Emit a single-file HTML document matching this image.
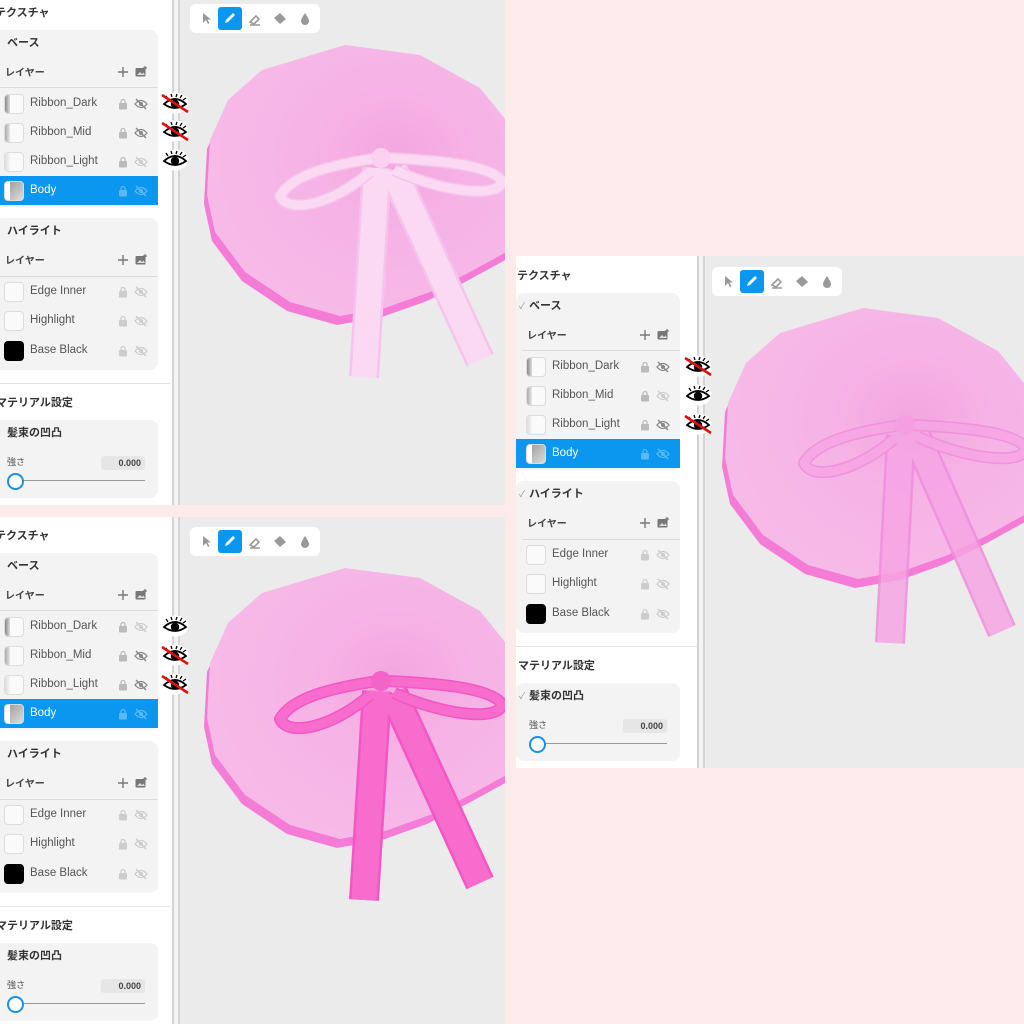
<!DOCTYPE html>
<html style="width:1024px;height:1024px;overflow:hidden"><head><meta charset="utf-8">
<style>
*{margin:0;padding:0;box-sizing:border-box}
body{width:1024px;height:1024px;background:#fcebea;position:relative;overflow:hidden;font-family:"Liberation Sans","Noto Sans CJK JP",sans-serif}
.wrap{position:absolute;overflow:hidden;background:#ebebeb}
.inner{position:absolute;left:0;top:0;width:520px;height:510px}
.side{position:absolute;left:-20px;top:-20px;width:192px;height:540px;background:#fff}
.div1{position:absolute;left:172px;top:-20px;width:8px;height:540px;background:#f4f4f4;border-left:2px solid #d4d4d4;border-right:2px solid #d4d4d4}
.a{position:absolute}
.t{position:absolute;white-space:nowrap;line-height:1}
.h1{font-size:11px;font-weight:bold;color:#333;font-family:"Noto Sans CJK JP",sans-serif}
.card{position:absolute;left:-6px;width:164px;background:#f3f3f3;border-radius:8px}
.lbl{font-size:10px;color:#444;font-weight:bold;font-family:"Noto Sans CJK JP",sans-serif}
.row{position:absolute;left:-6px;width:164px;height:29px}
.row .th{position:absolute;left:10px;top:5px;width:20px;height:20px;border:1px solid #ddd;border-radius:4px;background:#fafafa;overflow:hidden}
.row .th i{position:absolute;left:0;top:0;width:5px;height:18px;background:linear-gradient(90deg,#888,#ddd)}
.row .nm{position:absolute;left:36px;top:8px;font-size:11.5px;color:#555}
.row .ic{position:absolute;top:9px}
.sel{background:#0b97f0}
.sel .nm{color:#fff}
.line{position:absolute;height:1px;background:#dcdcdc}
.tb{position:absolute;left:190px;top:4px;width:130px;height:29px;background:#fff;border-radius:6px}
.pen{position:absolute;left:28px;top:3px;width:24px;height:23px;background:#0b97f0;border-radius:3px}
</style></head><body>

<svg width="0" height="0" style="position:absolute">
<defs>
<symbol id="lock" viewBox="0 0 10 12"><rect x="1" y="5" width="8" height="6.5" rx="1" fill="currentColor"/><path d="M3 5V3.5a2 2 0 0 1 4 0V5" stroke="currentColor" stroke-width="1.3" fill="none"/></symbol>
<symbol id="eyeoff" viewBox="0 0 14 12"><path d="M1 6Q7 -1 13 6Q7 13 1 6Z" stroke="currentColor" stroke-width="1.3" fill="none"/><circle cx="7" cy="6" r="2" fill="currentColor"/><line x1="2" y1="1" x2="12" y2="11" stroke="currentColor" stroke-width="1.4"/></symbol>
<symbol id="plus" viewBox="0 0 10 10"><path d="M5 0V10M0 5H10" stroke="#777" stroke-width="1.4"/></symbol>
<symbol id="img" viewBox="0 0 12 11"><rect x="0.5" y="2" width="10" height="8.5" rx="1" fill="#777"/><path d="M2 9L5 6L7 8L8.5 6.5L10 9Z" fill="#ddd"/><path d="M10 0V4M8 2H12" stroke="#777" stroke-width="1.2"/></symbol>
<symbol id="eye" viewBox="0 0 28 22"><ellipse cx="14" cy="11" rx="13.5" ry="10.5" fill="#fff"/><path d="M3 12Q14 2 25 12Q14 20 3 12Z" stroke="#000" stroke-width="1.8" fill="#fff"/><circle cx="14" cy="12" r="4.2" fill="#000"/><path d="M7 7L5 4M11 5L10 2M15 5L16 2M19 6L21 3M22 8L25 6" stroke="#000" stroke-width="1.3"/></symbol>
<symbol id="eyex" viewBox="0 0 28 22"><use href="#eye"/><line x1="1" y1="3" x2="27" y2="20" stroke="#e01010" stroke-width="2.6"/></symbol>
<radialGradient id="hg" cx="0.62" cy="0.42" r="0.6"><stop offset="0" stop-color="#f4a6df"/><stop offset="0.45" stop-color="#f6b3e6"/><stop offset="1" stop-color="#f7b9e8"/></radialGradient>
</defs>
</svg>

<!-- ============ PANEL TOP-LEFT ============ -->
<div class="wrap" style="left:0;top:0;width:505px;height:505px">
<div class="inner" style="left:0;top:0">
<div class="side"></div><div class="div1"></div>
<svg class="a" style="left:0;top:0" width="520" height="510">
<polygon fill="#f57cd6" transform="translate(-3,9)" points="228,100 262,70 345,45 420,55 480,88 510,125 510,250 470,272 430,292 385,308 340,316 290,302 245,272 215,232 207,195 210,140"/>
<polygon fill="url(#hg)" points="228,100 262,70 345,45 420,55 480,88 510,125 510,250 470,272 430,292 385,308 340,316 290,302 245,272 215,232 207,195 210,140"/>
<g fill="none" stroke-linejoin="round">
<path d="M377,168L364,377M393,170L480,360" stroke="#f5c3ec" stroke-width="30"/>
<path d="M377,168L364,377M393,170L480,360" stroke="#fcd9f3" stroke-width="25"/>
<path d="M378,158C330,165 292,175 280,196C288,214 332,205 370,172" stroke="#f5c3ec" stroke-width="12"/>
<path d="M387,158C432,160 490,164 502,181C500,199 442,192 394,170" stroke="#f5c3ec" stroke-width="12"/>
<path d="M378,158C330,165 292,175 280,196C288,214 332,205 370,172" stroke="#fcd9f3" stroke-width="9"/>
<path d="M387,158C432,160 490,164 502,181C500,199 442,192 394,170" stroke="#fcd9f3" stroke-width="9"/>
</g>
<circle cx="381" cy="158" r="10" fill="#fbd0f0"/>
</svg>
<div class="t h1" style="left:-5px;top:7px">テクスチャ</div>
<div class="card" style="top:30px;height:177px"></div>
<div class="t h1" style="left:7px;top:37px">ベース</div>
<div class="t lbl" style="left:5px;top:67px">レイヤー</div>
<svg class="a" style="left:118px;top:67px" width="10" height="10"><use href="#plus"/></svg>
<svg class="a" style="left:135px;top:66px" width="12" height="11"><use href="#img"/></svg>
<div class="line" style="left:0;top:87px;width:158px"></div>
<div class="row" style="top:89px"><div class="th"><i></i></div><div class="nm">Ribbon_Dark</div><svg class="ic" style="left:124px;color:#bbb" width="10" height="12"><use href="#lock"/></svg><svg class="ic" style="left:140px;color:#888" width="14" height="12"><use href="#eyeoff"/></svg></div>
<div class="row" style="top:118px"><div class="th"><i style="background:linear-gradient(90deg,#aaa,#e8e8e8)"></i></div><div class="nm">Ribbon_Mid</div><svg class="ic" style="left:124px;color:#bbb" width="10" height="12"><use href="#lock"/></svg><svg class="ic" style="left:140px;color:#888" width="14" height="12"><use href="#eyeoff"/></svg></div>
<div class="row" style="top:147px"><div class="th"><i style="background:linear-gradient(90deg,#ddd,#f6f6f6)"></i></div><div class="nm">Ribbon_Light</div><svg class="ic" style="left:124px;color:#bbb" width="10" height="12"><use href="#lock"/></svg><svg class="ic" style="left:140px;color:#ccc" width="14" height="12"><use href="#eyeoff"/></svg></div>
<div class="row sel" style="top:176px"><div class="th" style="background:linear-gradient(135deg,#999,#ddd)"><i style="background:#fff"></i></div><div class="nm">Body</div><svg class="ic" style="left:124px;color:#5ab8f5" width="10" height="12"><use href="#lock"/></svg><svg class="ic" style="left:140px;color:#5ab8f5" width="14" height="12"><use href="#eyeoff"/></svg></div>
<div class="card" style="top:218px;height:152px"></div>
<div class="t h1" style="left:7px;top:225px">ハイライト</div>
<div class="t lbl" style="left:5px;top:255px">レイヤー</div>
<svg class="a" style="left:118px;top:255px" width="10" height="10"><use href="#plus"/></svg>
<svg class="a" style="left:135px;top:254px" width="12" height="11"><use href="#img"/></svg>
<div class="line" style="left:0;top:276px;width:158px"></div>
<div class="row" style="top:277px"><div class="th"></div><div class="nm">Edge Inner</div><svg class="ic" style="left:124px;color:#ccc" width="10" height="12"><use href="#lock"/></svg><svg class="ic" style="left:140px;color:#ccc" width="14" height="12"><use href="#eyeoff"/></svg></div>
<div class="row" style="top:306px"><div class="th"></div><div class="nm">Highlight</div><svg class="ic" style="left:124px;color:#ccc" width="10" height="12"><use href="#lock"/></svg><svg class="ic" style="left:140px;color:#ccc" width="14" height="12"><use href="#eyeoff"/></svg></div>
<div class="row" style="top:336px"><div class="th" style="background:#000;border-color:#000"></div><div class="nm">Base Black</div><svg class="ic" style="left:124px;color:#ccc" width="10" height="12"><use href="#lock"/></svg><svg class="ic" style="left:140px;color:#ccc" width="14" height="12"><use href="#eyeoff"/></svg></div>
<div class="line" style="left:0;top:383px;width:170px;background:#e4e4e4"></div>
<div class="t h1" style="left:-4px;top:397px">マテリアル設定</div>
<div class="card" style="top:420px;height:78px"></div>
<div class="t h1" style="left:7px;top:427px">髪束の凹凸</div>
<div class="t" style="left:7px;top:457px;font-size:9px;color:#555;font-family:'Noto Sans CJK JP',sans-serif">強さ</div>
<div class="a" style="left:101px;top:456px;width:44px;height:14px;background:#e6e6e6;border-radius:3px;font-size:9px;color:#444;text-align:right;padding:2px 4px 0 0;font-weight:bold">0.000</div>
<div class="a" style="left:15px;top:480px;width:130px;height:1px;background:#999"></div>
<div class="a" style="left:7px;top:473px;width:17px;height:17px;border-radius:50%;background:#fff;border:2px solid #1e8fe0"></div>
<div class="tb"><svg class="a" style="left:12px;top:8px" width="10" height="13"><path d="M1 1L1 11L4 8L6 12L7.5 11.3L5.5 7.5L9 7.5Z" fill="#999"/></svg><div class="pen"><svg width="24" height="23"><path d="M7 16L8 13L15 6L17 8L10 15Z" fill="#fff"/></svg></div><svg class="a" style="left:58px;top:8px" width="14" height="14"><path d="M2 10L8 4L11 7L6 12ZM2 13H12" stroke="#999" stroke-width="1.6" fill="none"/></svg><svg class="a" style="left:83px;top:8px" width="14" height="14"><path d="M1 6L7 1L13 7L7 12Z" fill="#999"/></svg><svg class="a" style="left:110px;top:8px" width="10" height="14"><path d="M5 1Q9 7 9 9A4 4 0 0 1 1 9Q1 7 5 1Z" fill="#999"/></svg></div>
<svg class="a" style="left:161px;top:92px" width="28" height="22"><use href="#eyex"/></svg>
<svg class="a" style="left:161px;top:120px" width="28" height="22"><use href="#eyex"/></svg>
<svg class="a" style="left:161px;top:149px" width="28" height="22"><use href="#eye"/></svg>
</div></div>

<!-- ============ PANEL BOTTOM-LEFT ============ -->
<div class="wrap" style="left:0;top:517px;width:505px;height:507px">
<div class="inner" style="left:0;top:6px">
<div class="side"></div><div class="div1"></div>
<svg class="a" style="left:0;top:0" width="520" height="510">
<polygon fill="#f57cd6" transform="translate(-3,9)" points="228,100 262,70 345,45 420,55 480,88 510,125 510,250 470,272 430,292 385,308 340,316 290,302 245,272 215,232 207,195 210,140"/>
<polygon fill="url(#hg)" points="228,100 262,70 345,45 420,55 480,88 510,125 510,250 470,272 430,292 385,308 340,316 290,302 245,272 215,232 207,195 210,140"/>
<g fill="none" stroke-linejoin="round">
<path d="M377,168L364,377M393,170L480,360" stroke="#f257c4" stroke-width="30"/>
<path d="M377,168L364,377M393,170L480,360" stroke="#f76ccc" stroke-width="25"/>
<path d="M378,158C330,165 292,175 280,196C288,214 332,205 370,172" stroke="#f257c4" stroke-width="12"/>
<path d="M387,158C432,160 490,164 502,181C500,199 442,192 394,170" stroke="#f257c4" stroke-width="12"/>
<path d="M378,158C330,165 292,175 280,196C288,214 332,205 370,172" stroke="#f76ccc" stroke-width="9"/>
<path d="M387,158C432,160 490,164 502,181C500,199 442,192 394,170" stroke="#f76ccc" stroke-width="9"/>
</g>
<circle cx="381" cy="158" r="10" fill="#f463c8"/>
</svg>
<div class="t h1" style="left:-5px;top:7px">テクスチャ</div>
<div class="card" style="top:30px;height:177px"></div>
<div class="t h1" style="left:7px;top:37px">ベース</div>
<div class="t lbl" style="left:5px;top:67px">レイヤー</div>
<svg class="a" style="left:118px;top:67px" width="10" height="10"><use href="#plus"/></svg>
<svg class="a" style="left:135px;top:66px" width="12" height="11"><use href="#img"/></svg>
<div class="line" style="left:0;top:87px;width:158px"></div>
<div class="row" style="top:89px"><div class="th"><i></i></div><div class="nm">Ribbon_Dark</div><svg class="ic" style="left:124px;color:#bbb" width="10" height="12"><use href="#lock"/></svg><svg class="ic" style="left:140px;color:#ccc" width="14" height="12"><use href="#eyeoff"/></svg></div>
<div class="row" style="top:118px"><div class="th"><i style="background:linear-gradient(90deg,#aaa,#e8e8e8)"></i></div><div class="nm">Ribbon_Mid</div><svg class="ic" style="left:124px;color:#bbb" width="10" height="12"><use href="#lock"/></svg><svg class="ic" style="left:140px;color:#888" width="14" height="12"><use href="#eyeoff"/></svg></div>
<div class="row" style="top:147px"><div class="th"><i style="background:linear-gradient(90deg,#ddd,#f6f6f6)"></i></div><div class="nm">Ribbon_Light</div><svg class="ic" style="left:124px;color:#bbb" width="10" height="12"><use href="#lock"/></svg><svg class="ic" style="left:140px;color:#888" width="14" height="12"><use href="#eyeoff"/></svg></div>
<div class="row sel" style="top:176px"><div class="th" style="background:linear-gradient(135deg,#999,#ddd)"><i style="background:#fff"></i></div><div class="nm">Body</div><svg class="ic" style="left:124px;color:#5ab8f5" width="10" height="12"><use href="#lock"/></svg><svg class="ic" style="left:140px;color:#5ab8f5" width="14" height="12"><use href="#eyeoff"/></svg></div>
<div class="card" style="top:218px;height:152px"></div>
<div class="t h1" style="left:7px;top:225px">ハイライト</div>
<div class="t lbl" style="left:5px;top:255px">レイヤー</div>
<svg class="a" style="left:118px;top:255px" width="10" height="10"><use href="#plus"/></svg>
<svg class="a" style="left:135px;top:254px" width="12" height="11"><use href="#img"/></svg>
<div class="line" style="left:0;top:276px;width:158px"></div>
<div class="row" style="top:277px"><div class="th"></div><div class="nm">Edge Inner</div><svg class="ic" style="left:124px;color:#ccc" width="10" height="12"><use href="#lock"/></svg><svg class="ic" style="left:140px;color:#ccc" width="14" height="12"><use href="#eyeoff"/></svg></div>
<div class="row" style="top:306px"><div class="th"></div><div class="nm">Highlight</div><svg class="ic" style="left:124px;color:#ccc" width="10" height="12"><use href="#lock"/></svg><svg class="ic" style="left:140px;color:#ccc" width="14" height="12"><use href="#eyeoff"/></svg></div>
<div class="row" style="top:336px"><div class="th" style="background:#000;border-color:#000"></div><div class="nm">Base Black</div><svg class="ic" style="left:124px;color:#ccc" width="10" height="12"><use href="#lock"/></svg><svg class="ic" style="left:140px;color:#ccc" width="14" height="12"><use href="#eyeoff"/></svg></div>
<div class="line" style="left:0;top:383px;width:170px;background:#e4e4e4"></div>
<div class="t h1" style="left:-4px;top:397px">マテリアル設定</div>
<div class="card" style="top:420px;height:78px"></div>
<div class="t h1" style="left:7px;top:427px">髪束の凹凸</div>
<div class="t" style="left:7px;top:457px;font-size:9px;color:#555;font-family:'Noto Sans CJK JP',sans-serif">強さ</div>
<div class="a" style="left:101px;top:456px;width:44px;height:14px;background:#e6e6e6;border-radius:3px;font-size:9px;color:#444;text-align:right;padding:2px 4px 0 0;font-weight:bold">0.000</div>
<div class="a" style="left:15px;top:480px;width:130px;height:1px;background:#999"></div>
<div class="a" style="left:7px;top:473px;width:17px;height:17px;border-radius:50%;background:#fff;border:2px solid #1e8fe0"></div>
<div class="tb"><svg class="a" style="left:12px;top:8px" width="10" height="13"><path d="M1 1L1 11L4 8L6 12L7.5 11.3L5.5 7.5L9 7.5Z" fill="#999"/></svg><div class="pen"><svg width="24" height="23"><path d="M7 16L8 13L15 6L17 8L10 15Z" fill="#fff"/></svg></div><svg class="a" style="left:58px;top:8px" width="14" height="14"><path d="M2 10L8 4L11 7L6 12ZM2 13H12" stroke="#999" stroke-width="1.6" fill="none"/></svg><svg class="a" style="left:83px;top:8px" width="14" height="14"><path d="M1 6L7 1L13 7L7 12Z" fill="#999"/></svg><svg class="a" style="left:110px;top:8px" width="10" height="14"><path d="M5 1Q9 7 9 9A4 4 0 0 1 1 9Q1 7 5 1Z" fill="#999"/></svg></div>
<svg class="a" style="left:161px;top:92px" width="28" height="22"><use href="#eye"/></svg>
<svg class="a" style="left:161px;top:121px" width="28" height="22"><use href="#eyex"/></svg>
<svg class="a" style="left:161px;top:150px" width="28" height="22"><use href="#eyex"/></svg>
</div></div>

<!-- ============ PANEL RIGHT ============ -->
<div class="wrap" style="left:516px;top:256px;width:508px;height:512px">
<div class="inner" style="left:6px;top:7px">
<div class="side" style="width:195px"></div><div class="div1" style="left:175px"></div>
<svg class="a" style="left:0;top:0" width="520" height="510">
<g transform="translate(-4,0)">
<polygon fill="#f57cd6" transform="translate(-3,9)" points="228,100 262,70 345,45 420,55 480,88 510,125 510,250 470,272 430,292 385,308 340,316 290,302 245,272 215,232 207,195 210,140"/>
<polygon fill="url(#hg)" points="228,100 262,70 345,45 420,55 480,88 510,125 510,250 470,272 430,292 385,308 340,316 290,302 245,272 215,232 207,195 210,140"/>
<g fill="none" stroke-linejoin="round" opacity="0.85">
<path d="M383,172L372,380M398,172L484,368" stroke="#f08ddc" stroke-width="30"/>
<path d="M383,172L372,380M398,172L484,368" stroke="#f6a5e4" stroke-width="25"/>
<path d="M384,162C336,169 298,179 286,200C294,218 338,209 376,176" stroke="#f08ddc" stroke-width="12"/>
<path d="M393,162C438,164 496,168 508,185C506,203 448,196 400,174" stroke="#f08ddc" stroke-width="12"/>
<path d="M384,162C336,169 298,179 286,200C294,218 338,209 376,176" stroke="#f6a5e4" stroke-width="9"/>
<path d="M393,162C438,164 496,168 508,185C506,203 448,196 400,174" stroke="#f6a5e4" stroke-width="9"/>
</g>
<circle cx="387" cy="162" r="10" fill="#f59ee2"/>
</g>
</svg>
<div class="t h1" style="left:-5px;top:7px">テクスチャ</div>
<div class="card" style="top:30px;height:177px"></div>
<div class="t" style="left:-3px;top:39px;font-size:9px;color:#999">✓</div>
<div class="t h1" style="left:7px;top:37px">ベース</div>
<div class="t lbl" style="left:5px;top:67px">レイヤー</div>
<svg class="a" style="left:118px;top:67px" width="10" height="10"><use href="#plus"/></svg>
<svg class="a" style="left:135px;top:66px" width="12" height="11"><use href="#img"/></svg>
<div class="line" style="left:0;top:87px;width:158px"></div>
<div class="row" style="top:89px"><div class="th"><i></i></div><div class="nm">Ribbon_Dark</div><svg class="ic" style="left:124px;color:#bbb" width="10" height="12"><use href="#lock"/></svg><svg class="ic" style="left:140px;color:#888" width="14" height="12"><use href="#eyeoff"/></svg></div>
<div class="row" style="top:118px"><div class="th"><i style="background:linear-gradient(90deg,#aaa,#e8e8e8)"></i></div><div class="nm">Ribbon_Mid</div><svg class="ic" style="left:124px;color:#bbb" width="10" height="12"><use href="#lock"/></svg><svg class="ic" style="left:140px;color:#ccc" width="14" height="12"><use href="#eyeoff"/></svg></div>
<div class="row" style="top:147px"><div class="th"><i style="background:linear-gradient(90deg,#ddd,#f6f6f6)"></i></div><div class="nm">Ribbon_Light</div><svg class="ic" style="left:124px;color:#bbb" width="10" height="12"><use href="#lock"/></svg><svg class="ic" style="left:140px;color:#888" width="14" height="12"><use href="#eyeoff"/></svg></div>
<div class="row sel" style="top:176px"><div class="th" style="background:linear-gradient(135deg,#999,#ddd)"><i style="background:#fff"></i></div><div class="nm">Body</div><svg class="ic" style="left:124px;color:#5ab8f5" width="10" height="12"><use href="#lock"/></svg><svg class="ic" style="left:140px;color:#5ab8f5" width="14" height="12"><use href="#eyeoff"/></svg></div>
<div class="card" style="top:218px;height:152px"></div>
<div class="t" style="left:-3px;top:227px;font-size:9px;color:#999">✓</div>
<div class="t h1" style="left:7px;top:225px">ハイライト</div>
<div class="t lbl" style="left:5px;top:255px">レイヤー</div>
<svg class="a" style="left:118px;top:255px" width="10" height="10"><use href="#plus"/></svg>
<svg class="a" style="left:135px;top:254px" width="12" height="11"><use href="#img"/></svg>
<div class="line" style="left:0;top:276px;width:158px"></div>
<div class="row" style="top:277px"><div class="th"></div><div class="nm">Edge Inner</div><svg class="ic" style="left:124px;color:#ccc" width="10" height="12"><use href="#lock"/></svg><svg class="ic" style="left:140px;color:#ccc" width="14" height="12"><use href="#eyeoff"/></svg></div>
<div class="row" style="top:306px"><div class="th"></div><div class="nm">Highlight</div><svg class="ic" style="left:124px;color:#ccc" width="10" height="12"><use href="#lock"/></svg><svg class="ic" style="left:140px;color:#ccc" width="14" height="12"><use href="#eyeoff"/></svg></div>
<div class="row" style="top:336px"><div class="th" style="background:#000;border-color:#000"></div><div class="nm">Base Black</div><svg class="ic" style="left:124px;color:#ccc" width="10" height="12"><use href="#lock"/></svg><svg class="ic" style="left:140px;color:#ccc" width="14" height="12"><use href="#eyeoff"/></svg></div>
<div class="line" style="left:-6px;top:383px;width:181px;background:#e4e4e4"></div>
<div class="t h1" style="left:-4px;top:397px">マテリアル設定</div>
<div class="card" style="top:420px;height:78px"></div>
<div class="t" style="left:-3px;top:429px;font-size:9px;color:#999">✓</div>
<div class="t h1" style="left:7px;top:427px">髪束の凹凸</div>
<div class="t" style="left:7px;top:457px;font-size:9px;color:#555;font-family:'Noto Sans CJK JP',sans-serif">強さ</div>
<div class="a" style="left:101px;top:456px;width:44px;height:14px;background:#e6e6e6;border-radius:3px;font-size:9px;color:#444;text-align:right;padding:2px 4px 0 0;font-weight:bold">0.000</div>
<div class="a" style="left:15px;top:480px;width:130px;height:1px;background:#999"></div>
<div class="a" style="left:7px;top:473px;width:17px;height:17px;border-radius:50%;background:#fff;border:2px solid #1e8fe0"></div>
<div class="tb"><svg class="a" style="left:12px;top:8px" width="10" height="13"><path d="M1 1L1 11L4 8L6 12L7.5 11.3L5.5 7.5L9 7.5Z" fill="#999"/></svg><div class="pen"><svg width="24" height="23"><path d="M7 16L8 13L15 6L17 8L10 15Z" fill="#fff"/></svg></div><svg class="a" style="left:58px;top:8px" width="14" height="14"><path d="M2 10L8 4L11 7L6 12ZM2 13H12" stroke="#999" stroke-width="1.6" fill="none"/></svg><svg class="a" style="left:83px;top:8px" width="14" height="14"><path d="M1 6L7 1L13 7L7 12Z" fill="#999"/></svg><svg class="a" style="left:110px;top:8px" width="10" height="14"><path d="M5 1Q9 7 9 9A4 4 0 0 1 1 9Q1 7 5 1Z" fill="#999"/></svg></div>
<svg class="a" style="left:162px;top:92px" width="28" height="22"><use href="#eyex"/></svg>
<svg class="a" style="left:162px;top:121px" width="28" height="22"><use href="#eye"/></svg>
<svg class="a" style="left:162px;top:150px" width="28" height="22"><use href="#eyex"/></svg>
</div></div>

</body></html>
